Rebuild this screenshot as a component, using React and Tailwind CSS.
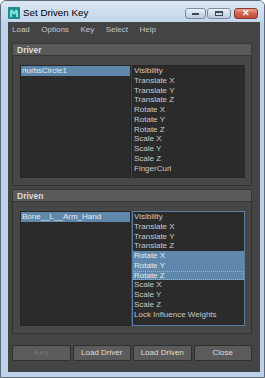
import React from 'react';

const font = { fontFamily: '"Liberation Sans", Arial, sans-serif' };

const driverAttrs = ['Visibility', 'Translate X', 'Translate Y', 'Translate Z', 'Rotate X', 'Rotate Y', 'Rotate Z', 'Scale X', 'Scale Y', 'Scale Z', 'FingerCurl'];
const drivenAttrs = ['Visibility', 'Translate X', 'Translate Y', 'Translate Z', 'Rotate X', 'Rotate Y', 'Rotate Z', 'Scale X', 'Scale Y', 'Scale Z', 'Lock Influence Weights'];
const drivenSel = ['Rotate X', 'Rotate Y', 'Rotate Z'];

function Row({ text, selected, focus }) {
    return (
        <div className={`h-[9.75px] leading-[9.75px] pl-[1px] whitespace-nowrap ${selected ? 'bg-[#5f88ac] text-[#e8e8e8]' : 'text-[#c9c9c9]'} ${focus ? 'outline outline-1 outline-dotted outline-[#9bb7d0] -outline-offset-1' : ''}`}>
            {text}
        </div>
    );
}

function Section({ title, object, attrs, selected = [], focused, height }) {
    return (
        <div className="ml-[4px] mr-[8px]">
            <div className="h-[13px] bg-[#5a5a5a] border border-[#373737] rounded-t-[2px] pl-[4px] text-[8.5px] leading-[12px] font-bold text-[#dadada]">
                {title}
            </div>
            <div className="border-x border-b border-[#323232] bg-[#474747] pt-[9px] pb-[7px] pl-[7px] pr-[6px] flex gap-[1px]">
                <div className={`w-[111px] bg-[#2b2b2b] border border-[#262626] ${height}`}>
                    <Row text={object} selected />
                </div>
                <div className={`flex-1 bg-[#2b2b2b] border ${focused ? 'border-[#5a7ea3]' : 'border-[#262626]'} ${height}`}>
                    {attrs.map((a) => (
                        <Row key={a} text={a} selected={selected.includes(a)} focus={focused && a === 'Rotate Z'} />
                    ))}
                </div>
            </div>
        </div>
    );
}

function WinButton({ children, red, wide }) {
    return (
        <div className={`h-[11px] ${wide ? 'w-[24px]' : 'w-[21px]'} rounded-[3px] border flex items-center justify-center ${red ? 'border-[#8a3a32] bg-gradient-to-b from-[#e8a293] via-[#d0614d] to-[#c14a38]' : 'border-[#7d8ea3] bg-gradient-to-b from-[#eef3f9] via-[#cfdbe9] to-[#b9cade]'}`}>
            {children}
        </div>
    );
}

export default function App() {
    return (
        <div style={font} className="w-[265px] h-[378px] bg-[#bcd2ea] border border-[#5d6b7b] rounded-t-[6px] flex flex-col overflow-hidden">
            {/* title bar */}
            <div className="h-[21px] flex items-start bg-gradient-to-b from-[#dbe6f2] to-[#c3d6ec] relative">
                <svg width="12" height="12" viewBox="0 0 12 12" className="ml-[7px] mt-[6px]">
                    <rect x="0" y="0" width="12" height="12" rx="1" fill="#1e8c8c" />
                    <path d="M2 10 L2 4 L4 2 L6 5 L8 2 L10 4 L10 10 L8 10 L8 6 L6 8 L4 6 L4 10 Z" fill="#7fe0d6" />
                </svg>
                <span className="ml-[3px] mt-[5px] text-[9.8px] leading-[13px] text-black">Set Driven Key</span>
                <div className="absolute right-[6px] top-[7px] flex gap-[1px]">
                    <WinButton>
                        <div className="w-[7px] h-[2px] bg-[#3b4a5c]" />
                    </WinButton>
                    <WinButton wide>
                        <div className="w-[8px] h-[5px] border border-[#3b4a5c] border-t-2" />
                    </WinButton>
                    <div className="ml-[2px]">
                        <WinButton red wide>
                            <span className="text-white text-[9px] leading-none font-bold">✕</span>
                        </WinButton>
                    </div>
                </div>
            </div>

            {/* client area */}
            <div className="ml-[7px] mr-[4px] h-[350px] bg-[#444444] flex flex-col">
                <div className="h-[16px] flex items-center text-[8px] text-[#c4c4c4] pl-[4px] gap-[11.5px]">
                    <span>Load</span>
                    <span>Options</span>
                    <span>Key</span>
                    <span>Select</span>
                    <span>Help</span>
                </div>

                <div className="mt-[5px] text-[8px]">
                    <Section title="Driver" object="nurbsCircle1" attrs={driverAttrs} height="h-[113px]" />
                </div>

                <div className="mt-[3px] text-[8px]">
                    <Section title="Driven" object="Bone__L__Arm_Hand" attrs={drivenAttrs} selected={drivenSel} focused height="h-[115px]" />
                </div>

                <div className="mt-[11px] ml-[4px] mr-[8px] grid grid-cols-4 gap-[2px] text-[8px]">
                    {['Key', 'Load Driver', 'Load Driven', 'Close'].map((b, i) => (
                        <div key={b} className={`h-[16px] rounded-[2px] border border-[#2f2f2f] bg-[#5b5b5b] flex items-center justify-center ${i === 0 ? 'text-[#7a7a7a]' : 'text-[#dedede]'}`}>
                            {b}
                        </div>
                    ))}
                </div>
            </div>
        </div>
    );
}
